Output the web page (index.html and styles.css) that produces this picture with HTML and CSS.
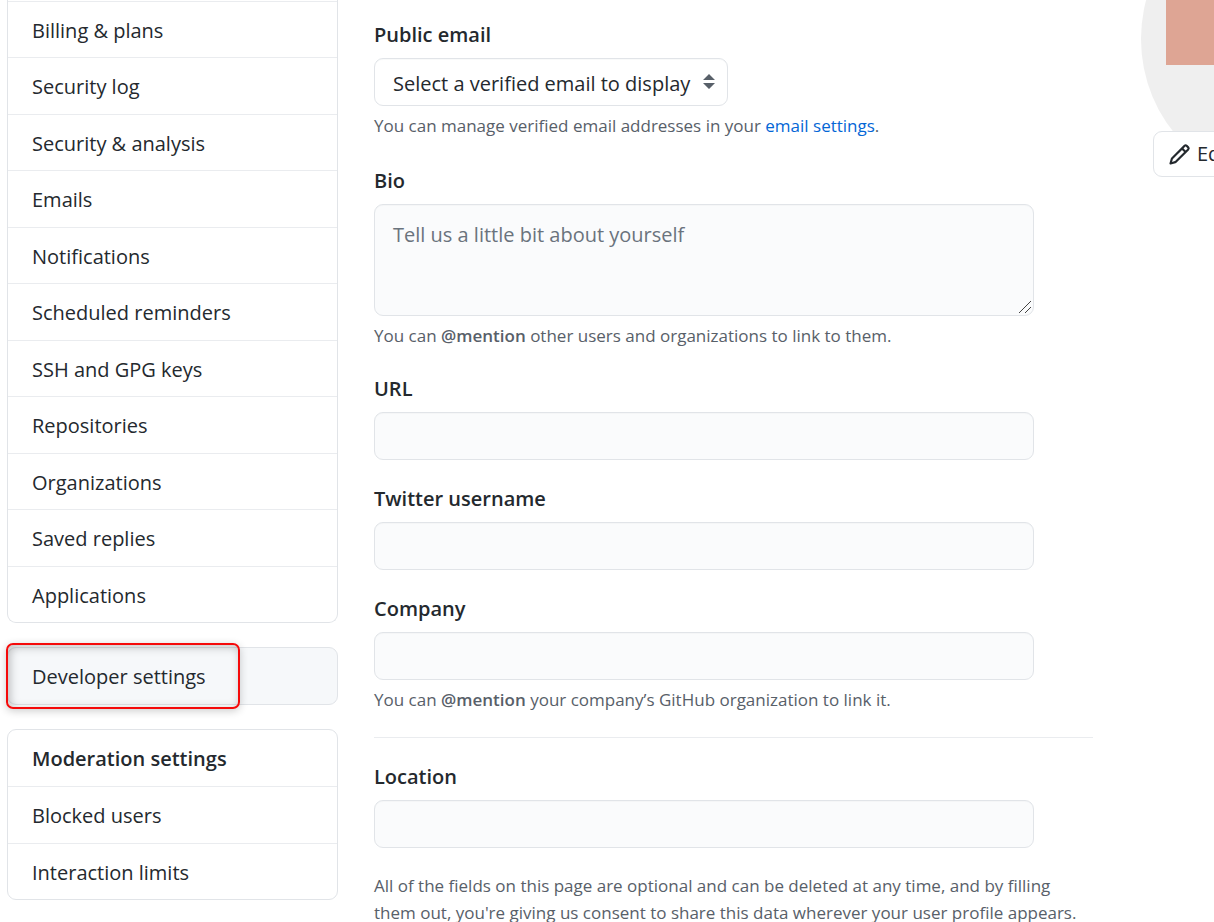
FILE: index.html
```
<!DOCTYPE html>
<html lang="en">
<head>
<meta charset="utf-8">
<title>Public profile</title>
<link rel="stylesheet" href="styles.css">
</head>
<body>
<div class="page">
  <nav class="sidebar" aria-label="Settings">
    <ul class="menu menu-continued">
      <li><a href="#">Billing &amp; plans</a></li>
      <li><a href="#">Security log</a></li>
      <li><a href="#">Security &amp; analysis</a></li>
      <li><a href="#">Emails</a></li>
      <li><a href="#">Notifications</a></li>
      <li><a href="#">Scheduled reminders</a></li>
      <li><a href="#">SSH and GPG keys</a></li>
      <li><a href="#">Repositories</a></li>
      <li><a href="#">Organizations</a></li>
      <li><a href="#">Saved replies</a></li>
      <li><a href="#">Applications</a></li>
    </ul>
    <div class="menu menu-developer">
      <a href="#">Developer settings</a>
      <span class="highlight"></span>
    </div>
    <ul class="menu">
      <li class="menu-heading">Moderation settings</li>
      <li><a href="#">Blocked users</a></li>
      <li><a href="#">Interaction limits</a></li>
    </ul>
  </nav>

  <form class="profile">
    <div class="group group-email">
      <label for="email">Public email</label>
      <div class="select-wrap">
        <select id="email"><option>Select a verified email to display</option></select>
        <svg class="arrows" viewBox="0 0 12 16" aria-hidden="true"><path d="M6 0l6 6H0zM0 9h12l-6 6z"/></svg>
      </div>
      <p class="hint">You can manage verified email addresses in your <a href="#">email settings</a>.</p>
    </div>
    <div class="group">
      <label for="bio">Bio</label>
      <textarea id="bio" placeholder="Tell us a little bit about yourself"></textarea>
      <p class="hint">You can <strong>@mention</strong> other users and organizations to link to them.</p>
    </div>
    <div class="group">
      <label for="url">URL</label>
      <input id="url" type="text">
    </div>
    <div class="group">
      <label for="twitter">Twitter username</label>
      <input id="twitter" type="text">
    </div>
    <div class="group">
      <label for="company">Company</label>
      <input id="company" type="text">
      <p class="hint">You can <strong>@mention</strong> your company’s GitHub organization to link it.</p>
    </div>
    <hr>
    <div class="group">
      <label for="location">Location</label>
      <input id="location" type="text">
    </div>
    <p class="note">All of the fields on this page are optional and can be deleted at any time, and by filling them out, you're giving us consent to share this data wherever your user profile appears.</p>
  </form>

  <aside class="picture">
    <svg class="avatar" viewBox="0 0 300 189" aria-hidden="true">
      <circle cx="150" cy="39" r="150" fill="#efefef"/>
      <path d="M25 0h125v65H25z" fill="#dea594"/>
    </svg>
    <button class="edit" type="button">
      <svg viewBox="0 0 16 16" aria-hidden="true"><path fill-rule="evenodd" d="M11.013 1.427a1.75 1.75 0 012.474 0l1.086 1.086a1.75 1.75 0 010 2.474l-8.61 8.61c-.21.21-.47.364-.756.445l-3.251.93a.75.75 0 01-.927-.928l.929-3.25a1.75 1.75 0 01.445-.758l8.61-8.61zm1.414 1.06a.25.25 0 00-.354 0L10.811 3.75l1.439 1.44 1.263-1.263a.25.25 0 000-.354l-1.086-1.086zM11.189 6.25L9.75 4.81l-6.286 6.287a.25.25 0 00-.064.108l-.558 1.953 1.953-.558a.249.249 0 00.108-.064l6.286-6.286z"/></svg>
      Edit
    </button>
  </aside>
</div>
</body>
</html>
```
FILE: styles.css
```
* {
  box-sizing: border-box;
}

html {
  overflow: hidden;
}

body {
  margin: 0;
  background: #fff;
  color: #24292e;
  font: 20px/30px "Open Sans", "Noto Sans", sans-serif;
}

.page {
  display: flex;
  overflow: hidden;
}

/* Sidebar */
.sidebar {
  flex: 0 0 331px;
  margin: 0 36px 0 7px;
  display: flex;
  flex-direction: column;
  gap: 24px;
}

.menu {
  margin: 0;
  padding: 0;
  list-style: none;
  border: 1px solid #e1e4e8;
  border-radius: 9px;
}

.menu-continued {
  padding-top: 1px;
  border-top: 0;
  border-radius: 0 0 9px 9px;
}

.menu li,
.menu-developer {
  display: flex;
  align-items: center;
}

.menu li {
  height: 56px;
  border-top: 1px solid #eaecef;
}

.menu li:nth-child(even) {
  height: 57px;
}

.menu a {
  flex: 1;
  padding: 2px 24px 0;
  color: inherit;
  text-decoration: none;
}

.menu .menu-heading {
  padding: 2px 24px 0;
  border-top: 0;
  font-weight: 600;
}

.menu-developer {
  position: relative;
  height: 58px;
  background: #f6f8fa;
}

.highlight {
  position: absolute;
  inset: -5px 97px -5px -2px;
  border: 2px solid #f50a0a;
  border-radius: 7px;
  box-shadow: 0 2px 8px rgba(0, 0, 0, 0.2), inset 2px 2px 10px rgba(0, 0, 0, 0.25);
}

/* Profile form */
.profile {
  flex: 1;
  min-width: 0;
  padding-top: 20px;
}

.group {
  display: flex;
  flex-direction: column;
  align-items: flex-start;
  margin-bottom: 24px;
}

.group-email {
  margin-bottom: 26px;
}

label {
  margin-bottom: 8px;
  font-weight: 600;
}

input,
textarea,
select {
  display: block;
  width: 100%;
  max-width: 660px;
  height: 48px;
  margin: 0;
  padding: 10px 18px 8px;
  border: 1px solid #e1e4e8;
  border-radius: 9px;
  background: #fafbfc;
  box-shadow: inset 0 1px 0 rgba(225, 228, 232, 0.2);
  color: inherit;
  font: inherit;
}

textarea {
  height: 112px;
  padding-top: 15px;
  resize: both;
}

textarea::placeholder {
  color: #6a737d;
}

textarea::-webkit-resizer {
  background: linear-gradient(135deg, transparent 51%, #444 52%, #444 55%, transparent 56%, transparent 75%, #444 76%, #444 79%, transparent 80%) 0 0 / 13px 13px no-repeat;
}

.select-wrap {
  position: relative;
  width: 354px;
}

select {
  appearance: none;
  padding-right: 30px;
  background: #fff;
}

.arrows {
  position: absolute;
  top: 16px;
  right: 13px;
  width: 12px;
  height: 16px;
  fill: #586069;
  pointer-events: none;
}

.hint,
.note {
  margin: 0;
  color: #586069;
  font-size: 17px;
  line-height: 27px;
}

.hint {
  margin: 6px 0 1px;
}

.hint a {
  color: #0366d6;
  text-decoration: none;
}

.hint strong {
  font-weight: 600;
}

hr {
  height: 1px;
  margin: -1px 0 24px;
  border: 0;
  background: #eaecef;
}

/* Profile picture runs off the right edge */
.picture {
  position: relative;
  flex: 0 0 73px;
  min-width: 0;
  margin-left: 48px;
}

.avatar {
  display: block;
  width: 300px;
  height: 189px;
}

.edit {
  position: absolute;
  top: 131px;
  left: 12px;
  display: flex;
  align-items: center;
  gap: 6px;
  height: 46px;
  padding: 0 14px;
  border: 1px solid #e1e4e8;
  border-radius: 9px;
  background: #fff;
  color: inherit;
  font: inherit;
}

.edit svg {
  flex: none;
  width: 23px;
  height: 23px;
  fill: #24292e;
}
```
